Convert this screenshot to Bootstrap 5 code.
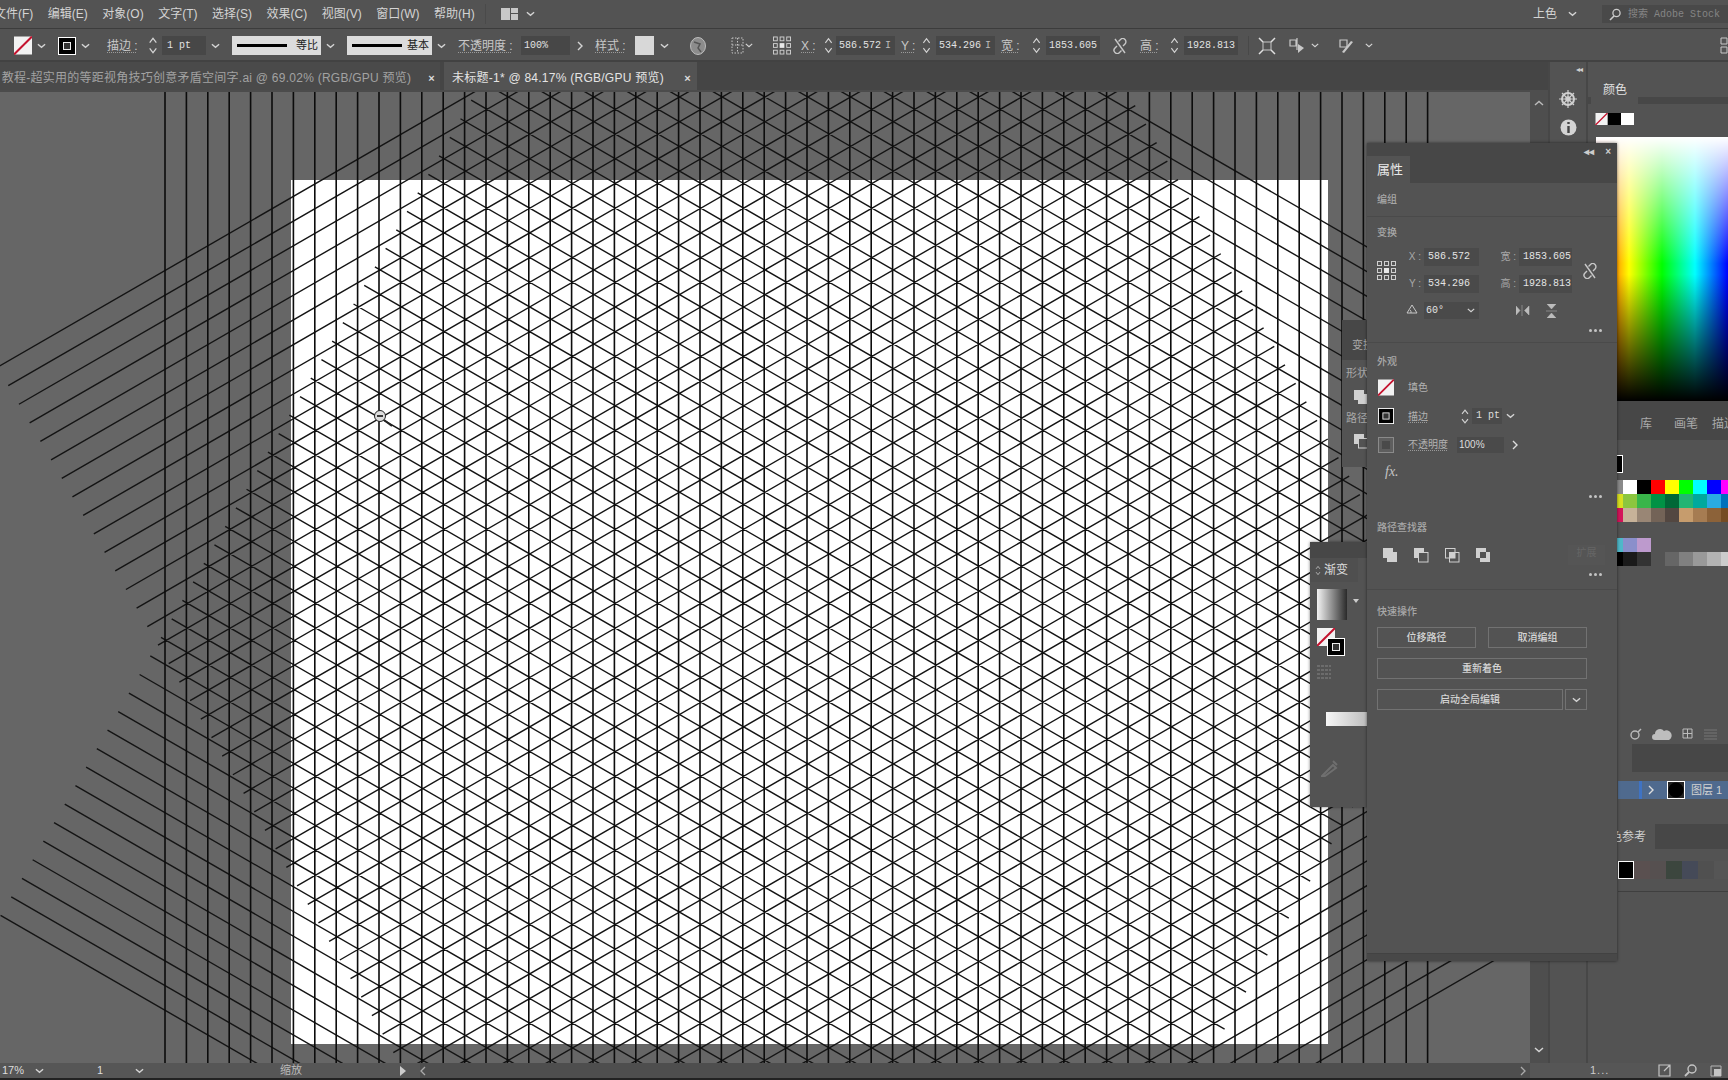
<!DOCTYPE html>
<html lang="zh-CN">

<head>
    <meta charset="UTF-8">
    <title>Illustrator</title>
    <link rel="stylesheet" href="https://cdn.jsdelivr.net/npm/bootstrap@5.3.0/dist/css/bootstrap.min.css">
    <style>
        html, body { margin: 0; background: #535353; overflow: hidden; }
        body { font-family: "Liberation Sans", "Noto Sans CJK SC", sans-serif; font-size: 12px; color: #d4d4d4; }
        svg { display: block; flex: none; }

        .app-shell { width: 1728px; height: 1080px; }

        /* menu */
        .menu-bar { height: 29px; border-bottom: 1px solid #3c3c3c; gap: 14.5px; }
        .menu-first { margin-left: -6px; }
        .menu-sep { width: 1px; height: 20px; background: #4a4a4a; margin-left: -4px; }
        .menu-chev { margin-left: -6px; }
        .menu-chev-right { margin-left: -4px; }
        .search-box { width: 126px; height: 18px; background: #494949; margin-left: 11px; padding-left: 7px; gap: 6px; color: #858585; font-family: "Liberation Mono", "Noto Sans CJK SC", monospace; font-size: 10px; white-space: nowrap; overflow: hidden; }

        /* option bar */
        .opt-bar { height: 33px; border-bottom: 2px solid #424242; padding-top: 2px; }
        .cell { flex: none; height: 19px; display: flex; align-items: center; justify-content: center; }
        .cell-lab { color: #c8c8c8; justify-content: flex-start; text-decoration: underline dotted #9a9a9a; text-underline-offset: 2px; white-space: nowrap; font-size: 12px; }
        .cell-in { background: #474747; justify-content: flex-start; padding-left: 3px; color: #e2e2e2; font-family: "Liberation Mono", "Noto Sans CJK SC", monospace; font-size: 10px; }
        .cell-in i { font-style: normal; margin-left: 4px; color: #bbb; }
        .stroke-pick { background: #dcdcdc; color: #222; padding: 0 3px 0 5px; justify-content: space-between; font-size: 11px; }
        .stroke-line { width: 50px; height: 3px; background: #000; }
        .style-swatch { background: #d8d8d8; }
        .opt-sep { background: #484848; }
        .w1{width:1px}.w8{width:8px}.w10{width:10px}.w11{width:11px}.w13{width:13px}.w15{width:15px}.w16{width:16px}.w18{width:18px}.w19{width:19px}.w20{width:20px}.w25{width:25px}.w35{width:35px}.w36{width:36px}.w44{width:44px}.w49{width:49px}.w54{width:54px}.w59{width:59px}.w60{width:60px}.w85{width:85px}.w89{width:89px}
        .g1{margin-left:1px}.g2{margin-left:2px}.g3{margin-left:3px}.g4{margin-left:4px}.g5{margin-left:5px}.g6{margin-left:6px}.g8{margin-left:8px}.g9{margin-left:9px}.g10{margin-left:10px}.g12{margin-left:12px}.g13{margin-left:13px}.g14{margin-left:14px}.g16{margin-left:16px}.g18{margin-left:18px}.g19{margin-left:19px}.g25{margin-left:25px}
        .pt-pad { padding-left: 5px; }

        /* document area */
        .main-row { height: 1001px; }
        .doc-col { width: 1548px; }
        .tab-strip { height: 28px; background: #454545; }
        .doc-tab { height: 28px; white-space: nowrap; overflow: hidden; padding-top: 4px; letter-spacing: .25px; }
        .doc-tab-old { width: 440px; background: #4a4a4a; color: #a2a2a2; justify-content: flex-end; padding-right: 5px; gap: 17px; }
        .doc-tab-on { width: 253px; margin-left: 4px; background: #535353; color: #e4e4e4; padding-left: 8px; justify-content: space-between; padding-right: 6px; }
        .tab-x { font-weight: 700; font-size: 11px; color: #ddd; }
        .canvas-box { background: #666; border-top: 2px solid #4c4c4c; }
        .canvas-art { left: 0; top: -2px; }
        .vscroll { width: 18px; background: #4e4e4e; padding: 6px 0; }

        /* right dock */
        .icon-strip { width: 40px; border-left: 2px solid #474747; border-right: 2px solid #474747; gap: 10px; }
        .strip-arrows { height: 17px; font-size: 8px; color: #cfcfcf; letter-spacing: -1px; align-self: flex-end; padding: 2px 4px 0 0; }
        .dock-col { width: 140px; }
        .dock-gap { height: 14px; }
        .dock-tabs { height: 28px; background: linear-gradient(to bottom, transparent 21px, #474747 21px); }
        .dock-tab-on { width: 47px; margin-left: 3px; background: #535353; color: #e2e2e2; font-size: 12px; padding-left: 12px; }
        .mini-swatches { height: 33px; padding: 9px 0 0 7px; }
        .mini-cell { width: 13px; height: 12px; }
        .bg-k { background: #000; }
        .bg-w { background: #fff; }
        .spectrum { height: 264px; margin-left: 8px; background: linear-gradient(to bottom, #fff 0%, rgba(255,255,255,0) 48%, rgba(0,0,0,0) 52%, #000 100%), linear-gradient(to right, #f00 0, #ff0 33px, #0f0 66px, #0ff 99px, #00f 132px); }
        .dock-band { height: 7px; background: #474747; }
        .tabs-two { height: 32px; background: #474747; color: #a9a9a9; font-size: 12px; padding-left: 30px; gap: 0; }
        .tab-lib { width: 34px; margin-left: 22px; flex: none; }
        .tab-brush { width: 26px; flex: none; }
        .tab-desc { margin-left: 12px; white-space: nowrap; }
        .black-row { height: 40px; padding: 15px 0 0 29px; }
        .black-mark { width: 6px; height: 18px; background: #000; border: 1px solid #fff; border-left: 0; }
        .swatch-grid { display: grid; grid-template-columns: repeat(9, 14px); margin-left: 21px; grid-auto-rows: 14px; }
        .swatch-sp { height: 16px; }
        .dock-spacer { height: 158px; }
        .dock-tools { height: 20px; padding-left: 42px; gap: 10px; }
        .layer-head { height: 28px; background: #474747; margin-left: 44px; }
        .layer-row { height: 18px; margin-top: 9px; margin-left: 30px; background: #4f6a8e; color: #d2d2d2; font-size: 11px; }
        .layer-bar { width: 3px; height: 18px; background: #3f73c4; margin-left: 21px; }
        .layer-thumb { width: 18px; height: 18px; background: #fff; padding: 1px; margin-left: 13px; margin-right: 6px; }
        .layer-dot { width: 16px; height: 16px; background: radial-gradient(circle, #000 62%, #222 70%); }
        .layer-row > svg { margin-left: 6px; }
        .dock-tabs-three { height: 25px; margin-top: 25px; background: #474747; }
        .ref-tab { width: 67px; height: 25px; background: #535353; color: #d0d0d0; font-size: 12px; padding-right: 9px; white-space: nowrap; flex: none; }
        .ref-row { height: 18px; margin-top: 12px; margin-left: 30px; gap: 0; }
        .ref-black { width: 16px; height: 18px; background: #000; border: 1px solid #fff; flex: none; }
        .ref-mute { width: 16px; height: 18px; flex: none; }
        .ref-line { height: 1px; background: #3f3f3f; margin-top: 12px; margin-left: 30px; }

        /* properties panel */
        .prop-panel { left: 1367px; top: 81px; width: 250px; height: 818px; background: #535353; box-shadow: 0 0 3px rgba(0,0,0,.55); z-index: 3; }
        .prop-head { height: 40px; background: #474747; }
        .prop-tab { width: 43px; height: 27px; background: #535353; color: #e8e8e8; font-size: 13px; padding-left: 10px; }
        .prop-head-tools { right: 6px; top: 1px; gap: 11px; color: #ccc; font-size: 10px; font-weight: 700; }
        .sec { padding: 0 10px; border-bottom: 1px solid #4a4a4a; }
        .sec-lab { font-size: 10px; color: #a8a8a8; line-height: 14px; font-weight: 500; }
        .sec-group { height: 34px; padding-top: 10px; }
        .sec-trans { height: 126px; padding-top: 9px; }
        .sec-look { height: 169px; padding-top: 12px; border-bottom: 0; }
        .sec-path { height: 78px; padding-top: 9px; }
        .sec-quick { padding-top: 15px; border-bottom: 0; }
        .trans-grid { display: grid; grid-template-columns: 19px 28px 55px 40px 53px 26px; grid-template-rows: 18px 18px 17px; row-gap: 9px; margin-top: 8px; }
        .ref-span { grid-area: 1 / 1 / 3 / 2; align-self: center; }
        .link-span { grid-area: 1 / 6 / 3 / 7; align-self: center; justify-self: end; }
        .field-lab { color: #a8a8a8; font-size: 10px; text-align: right; padding-right: 3px; line-height: 18px; }
        .field-in { background: #4a4a4a; color: #e4e4e4; font-family: "Liberation Mono", "Noto Sans CJK SC", monospace; font-size: 10px; padding-left: 4px; line-height: 17px; }
        .angle-in { justify-content: space-between; padding-right: 4px; padding-left: 2px; }
        .angle-ic { grid-column: 2; justify-self: end; padding-right: 6px; }
        .flip-wrap { grid-column: 4 / span 2; padding-left: 37px; gap: 15px; }
        .more-dots { height: 4px; margin-top: 10px; gap: 2px; padding-right: 5px; }
        .more-dots b { width: 3px; height: 3px; border-radius: 50%; background: #c4c4c4; }
        .dots-look { margin-top: 16px; }
        .look-row { height: 17px; margin-bottom: 11.5px; }
        .look-lab { width: 52px; margin-left: 14px; font-size: 10px; color: #b2b2b2; white-space: nowrap; }
        .look-lab-ul { text-decoration: underline dotted #999; text-underline-offset: 2px; }
        .look-first { margin-top: 10px; }
        .pt-in { width: 30px; height: 16px; background: #4a4a4a; font-family: "Liberation Mono", monospace; font-size: 10px; color: #ddd; padding-left: 4px; line-height: 15px; }
        .pct-in { width: 47px; height: 16px; background: #4a4a4a; font-size: 10px; color: #ddd; margin-left: -3px; padding-left: 2px; line-height: 15px; }
        .fx-mark { font-family: "Liberation Serif", serif; font-style: italic; font-size: 14px; color: #c4c4c4; margin: 2px 0 0 8px; line-height: 14px; }
        .path-icons { margin-top: 12px; margin-left: 5px; gap: 15px; height: 16px; }
        .path-off { width: 37px; height: 20px; margin-left: 62px; color: #666; background: #555; font-size: 10px; text-align: center; }
        .act-btn { --bs-btn-padding-y: 0; --bs-btn-padding-x: 0; --bs-btn-font-size: 10px; --bs-btn-color: #d6d6d6; --bs-btn-border-color: #727272; --bs-btn-border-radius: 0; --bs-btn-hover-color: #fff; height: 21px; line-height: 19px; font-weight: 500; }
        .act-half { width: 99px; }
        .act-wide { width: 210px; }
        .act-main { width: 186px; }
        .act-side { width: 22px; height: 21px; border: 1px solid #727272; margin-left: 2px; }
        .act-stack { gap: 10px; margin-top: 8px; }
        .prop-grip { bottom: 0; left: 0; right: 0; height: 8px; background: #484848; border-top: 1px solid #424242; }

        /* docked fragments under the properties panel */
        .shape-panel { left: 1342px; top: 258px; width: 25px; height: 147px; background: #535353; z-index: 2; color: #a8a8a8; font-size: 11px; white-space: nowrap; }
        .shape-head { height: 40px; background: #474747; padding: 17px 0 0 10px; }
        .shape-lab { margin: 5px 0 0 4px; }
        .shape-ic { margin: 7px 0 4px 11px; }
        .grad-panel { left: 1310px; top: 480px; width: 57px; height: 265px; background: #535353; z-index: 2; box-shadow: 0 0 3px rgba(0,0,0,.5); }
        .grad-head { height: 16px; background: #474747; }
        .grad-tab { height: 24px; width: 48px; color: #dcdcdc; font-size: 12px; background: #4f4f4f; padding-left: 5px; gap: 3px; white-space: nowrap; }
        .grad-box { width: 30px; height: 31px; background: linear-gradient(to right, #f4f4f4, #2a2a2a); margin: 7px 0 0 7px; }
        .grad-tip { margin: 9px 0 0 7px; }
        .grad-pick { margin: 8px 0 0 7px; height: 28px; }
        .grad-stroke { margin-left: -8px; margin-top: 10px; }
        .grad-bar { width: 41px; height: 14px; background: linear-gradient(to right, #f6f6f6, #bdbdbd); margin: 33px 0 0 16px; }
        .grad-ink { margin: 31px 0 0 11px; }

        /* status */
        .status-bar { height: 17px; border-bottom: 2px solid #222; background: #565656; font-size: 11px; color: #ddd; white-space: nowrap; }
        .st-zoom { width: 35px; padding-left: 2px; }
        .st-page { margin-left: 53px; width: 38px; }
        .st-name { margin-left: 136px; width: 120px; color: #bbb; }
        .st-track { width: 1110px; height: 15px; background: #4e4e4e; flex: none; padding: 0 4px 0 0; }
        .st-arrow { width: 20px; }
        .st-right { margin-left: 60px; gap: 13px; }
        .st-one { margin-right: 36px; font-size: 11px; color: #ccc; letter-spacing: 1px; }
    </style>
</head>

<body>
    <svg class="d-none" xmlns="http://www.w3.org/2000/svg">
        <symbol id="chev" viewBox="0 0 10 6"><path d="M1 1l4 3.5L9 1" fill="none" stroke="#d4d4d4" stroke-width="1.5" /></symbol>
        <symbol id="updown" viewBox="0 0 10 20"><path d="M1.5 7L5 2.5 8.5 7M1.5 13L5 17.5 8.5 13" fill="none" stroke="#d4d4d4" stroke-width="1.3" /></symbol>
        <symbol id="nofill" viewBox="0 0 18 18"><rect width="18" height="18" fill="#f2f2f2" /><path d="M0 18L18 0" stroke="#c4122e" stroke-width="2" /></symbol>
        <symbol id="strokebox" viewBox="0 0 18 18"><rect x=".5" y=".5" width="17" height="17" fill="#000" stroke="#fff" /><rect x="5.5" y="5.5" width="7" height="7" fill="#333" stroke="#eee" /></symbol>
        <symbol id="refpts" viewBox="0 0 19 19"><g fill="none" stroke="#cfcfcf"><rect x=".5" y=".5" width="4" height="4" /><rect x="7.5" y=".5" width="4" height="4" /><rect x="14.5" y=".5" width="4" height="4" /><rect x=".5" y="7.5" width="4" height="4" /><rect x="14.5" y="7.5" width="4" height="4" /><rect x=".5" y="14.5" width="4" height="4" /><rect x="7.5" y="14.5" width="4" height="4" /><rect x="14.5" y="14.5" width="4" height="4" /></g><rect x="7" y="7" width="5" height="5" fill="#e8e8e8" /></symbol>
        <symbol id="linkoff" viewBox="0 0 16 16"><path d="M6.500 3.500l2-2a3 3 0 0 1 4.500 4.500l-2 2M9.500 12.500l-2 2A3 3 0 0 1 3 10l2-2M3 1l10 14" fill="none" stroke="#c8c8c8" stroke-width="1.4" /></symbol>
        <symbol id="pf" viewBox="0 0 16 16"><rect x="1" y="1" width="10" height="10" fill="#d0d0d0" /><rect x="5" y="5" width="10" height="10" fill="#d0d0d0" /></symbol>
        <symbol id="pf2" viewBox="0 0 16 16"><rect x="1" y="1" width="10" height="10" fill="#d0d0d0" /><rect x="5.5" y="5.5" width="9.5" height="9.5" fill="#535353" stroke="#d0d0d0" /></symbol>
        <symbol id="pf3" viewBox="0 0 16 16"><rect x="1.5" y="1.5" width="9.5" height="9.5" fill="none" stroke="#d0d0d0" /><rect x="5.5" y="5.5" width="9.5" height="9.5" fill="none" stroke="#d0d0d0" /><rect x="5.5" y="5.5" width="5.5" height="5.5" fill="#d0d0d0" /></symbol>
        <symbol id="pf4" viewBox="0 0 16 16"><path d="M1 1h10v4h4v10H5v-4H1zM5 5v6h6V5z" fill="#d0d0d0" fill-rule="evenodd" /></symbol>
    </svg>

    <div class="app-shell d-flex flex-column">
        <!-- menu bar -->
        <div class="menu-bar d-flex align-items-center text-nowrap">
            <span class="menu-first">文件(F)</span><span>编辑(E)</span><span>对象(O)</span><span>文字(T)</span><span>选择(S)</span><span>效果(C)</span><span>视图(V)</span><span>窗口(W)</span><span>帮助(H)</span>
            <span class="menu-sep"></span>
            <svg width="17" height="12" viewBox="0 0 17 12"><path d="M0 0h9v12H0zM10 0h7v5h-7zM10 6h7v6h-7z" fill="#c8c8c8" /></svg>
            <svg class="menu-chev" width="9" height="6"><use href="#chev" /></svg>
            <span class="ms-auto">上色</span>
            <svg class="menu-chev-right" width="9" height="6"><use href="#chev" /></svg>
            <div class="search-box d-flex align-items-center">
                <svg width="13" height="13" viewBox="0 0 13 13"><circle cx="7.5" cy="5" r="3.6" fill="none" stroke="#ccc" stroke-width="1.3" /><path d="M5 8l-4 4" stroke="#ccc" stroke-width="1.6" /></svg>
                <span>搜索 Adobe Stock</span>
            </div>
        </div>

        <!-- control bar -->
        <div class="opt-bar d-flex align-items-center">
            <svg class="g14" width="18" height="19"><use href="#nofill" /></svg>
            <span class="cell w18"><svg width="9" height="6"><use href="#chev" /></svg></span>
            <svg class="g8" width="18" height="18"><use href="#strokebox" /></svg>
            <span class="cell w18"><svg width="9" height="6"><use href="#chev" /></svg></span>
            <span class="cell cell-lab g13 w35">描边 :</span>
            <span class="cell g3 w15"><svg width="10" height="19"><use href="#updown" /></svg></span>
            <span class="cell cell-in pt-pad g2 w44">1 pt</span>
            <span class="cell w18"><svg width="9" height="6"><use href="#chev" /></svg></span>
            <span class="cell stroke-pick g8 w89"><span class="stroke-line"></span>等比</span>
            <span class="cell w18"><svg width="9" height="6"><use href="#chev" /></svg></span>
            <span class="cell stroke-pick g8 w85"><span class="stroke-line"></span>基本</span>
            <span class="cell w18"><svg width="9" height="6"><use href="#chev" /></svg></span>
            <span class="cell cell-lab g8 w60">不透明度 :</span>
            <span class="cell cell-in g3 w49">100%</span>
            <span class="cell w20"><svg width="6" height="10" viewBox="0 0 6 10"><path d="M1 1l4 4-4 4" fill="none" stroke="#d4d4d4" stroke-width="1.4" /></svg></span>
            <span class="cell cell-lab g5 w36">样式 :</span>
            <span class="cell style-swatch g4 w19"></span>
            <span class="cell w20"><svg width="9" height="6"><use href="#chev" /></svg></span>
            <svg class="g16" width="16" height="18" viewBox="0 0 16 18"><ellipse cx="8" cy="9" rx="7.5" ry="8.5" fill="#8c8c8c" stroke="#bcbcbc" /><path d="M4 5l6 2-2 4 3 4" fill="none" stroke="#555" stroke-width="1.5" /></svg>
            <svg class="g25" width="13" height="17" viewBox="0 0 13 17"><path d="M1 1h11v15H1zM1 8h11M6.500 1v15" fill="none" stroke="#c4c4c4" stroke-dasharray="1.500 1.500" /></svg>
            <span class="cell w10"><svg width="8" height="5"><use href="#chev" /></svg></span>
            <svg class="g19" width="18" height="19"><use href="#refpts" /></svg>
            <span class="cell cell-lab g10 w19">X :</span>
            <span class="cell g3 w11"><svg width="9" height="19"><use href="#updown" /></svg></span>
            <span class="cell cell-in g2 w59">586.572<i>I</i></span>
            <span class="cell cell-lab g6 w19">Y :</span>
            <span class="cell g1 w11"><svg width="9" height="19"><use href="#updown" /></svg></span>
            <span class="cell cell-in g4 w59">534.296<i>I</i></span>
            <span class="cell cell-lab g6 w25">宽 :</span>
            <span class="cell g5 w11"><svg width="9" height="19"><use href="#updown" /></svg></span>
            <span class="cell cell-in g4 w54">1853.605</span>
            <svg class="g12" width="16" height="16"><use href="#linkoff" /></svg>
            <span class="cell cell-lab g12 w25">高 :</span>
            <span class="cell g4 w11"><svg width="9" height="19"><use href="#updown" /></svg></span>
            <span class="cell cell-in g4 w54">1928.813</span>
            <span class="cell opt-sep g10 w1"></span>
            <svg class="g9" width="18" height="18" viewBox="0 0 18 18"><path d="M5 5h8v8H5z" fill="none" stroke="#c8c8c8" /><path d="M1 1l4 4M17 1l-4 4M1 17l4-4M17 17l-4-4" stroke="#e0e0e0" stroke-width="1.5" /></svg>
            <svg class="g12" width="18" height="18" viewBox="0 0 18 18"><path d="M2 3h6v6H2zM9 1v12" fill="none" stroke="#c8c8c8" stroke-width="1.200" /><path d="M10 7l6 4-6 5z" fill="#c8c8c8" /></svg>
            <span class="cell g4 w10"><svg width="8" height="5"><use href="#chev" /></svg></span>
            <svg class="g18" width="18" height="18" viewBox="0 0 18 18"><path d="M2 3h7v7H2z" fill="none" stroke="#c8c8c8" stroke-width="1.200" /><path d="M15 5L6 16l-2-1 9-11z" fill="#c8c8c8" /></svg>
            <span class="cell g8 w10"><svg width="8" height="5"><use href="#chev" /></svg></span>
            <svg class="ms-auto" width="8" height="17" viewBox="0 0 8 17"><path d="M1 1h6v6H1zM1 10h6v6H1z" fill="none" stroke="#c8c8c8" /></svg>
        </div>

        <div class="main-row d-flex position-relative">
            <div class="doc-col d-flex flex-column">
                <div class="tab-strip d-flex">
                    <div class="doc-tab doc-tab-old d-flex align-items-center">
                        <span>教程-超实用的等距视角技巧创意矛盾空间字.ai @ 69.02% (RGB/GPU 预览)</span><span class="tab-x">×</span>
                    </div>
                    <div class="doc-tab doc-tab-on d-flex align-items-center">
                        <span>未标题-1* @ 84.17% (RGB/GPU 预览)</span><span class="tab-x">×</span>
                    </div>
                </div>
                <div class="d-flex flex-grow-1">
                    <div class="canvas-box flex-grow-1 position-relative overflow-hidden">
                        <svg id="gridArt" class="canvas-art position-absolute" width="1530" height="975" viewBox="0 90 1530 975" xmlns="http://www.w3.org/2000/svg">
                            <rect x="291" y="180" width="1037" height="864" fill="#fff" />
                            <path id="diagLines" fill="none" stroke="#141414" stroke-width="1.4" />
                            <path id="vertLines" fill="none" stroke="#0c0c0c" stroke-width="1.6" />
                            <g>
                                <path d="M384 420l8 6" stroke="#222" stroke-width="2" />
                                <circle cx="380" cy="416" r="5.5" fill="#ddd" stroke="#222" />
                                <path d="M377 416h6" stroke="#111" stroke-width="1.600" />
                            </g>
                        </svg>
                    </div>
                    <div class="vscroll d-flex flex-column justify-content-between align-items-center">
                        <svg class="mt-1" width="10" height="6" viewBox="0 0 10 6"><path d="M1 5l4-3.500L9 5" fill="none" stroke="#bbb" stroke-width="1.400" /></svg>
                        <svg class="mb-1" width="10" height="6"><use href="#chev" /></svg>
                    </div>
                </div>
            </div>

            <div class="icon-strip d-flex flex-column align-items-center">
                <span class="strip-arrows">◂◂</span>
                <svg width="20" height="20" viewBox="0 0 20 20"><g fill="none" stroke="#d0d0d0"><circle cx="10" cy="10" r="6" stroke-width="2" /><circle cx="10" cy="10" r="2" stroke-width="1.500" /><path d="M10 1v18M1 10h18M4 4l12 12M16 4L4 16" stroke-width="1.200" /></g></svg>
                <svg width="17" height="17" viewBox="0 0 17 17"><circle cx="8.500" cy="8.500" r="8" fill="#d4d4d4" /><path d="M8.500 3v2M8.500 7v7" stroke="#444" stroke-width="2.400" /></svg>
            </div>

            <div class="dock-col d-flex flex-column overflow-hidden">
                <div class="dock-gap"></div>
                <div class="dock-tabs d-flex">
                    <div class="dock-tab-on d-flex align-items-center">颜色</div>
                </div>
                <div class="mini-swatches d-flex">
                    <svg width="13" height="12"><use href="#nofill" /></svg>
                    <span class="mini-cell bg-k"></span>
                    <span class="mini-cell bg-w"></span>
                </div>
                <div class="spectrum"></div>
                <div class="dock-band"></div>
                <div class="tabs-two d-flex align-items-center">
                    <span class="tab-lib">库</span><span class="tab-brush">画笔</span><span class="tab-desc">描边</span>
                </div>
                <div class="black-row"><div class="black-mark"></div></div>
                <div id="swatchesA" class="swatch-grid"></div>
                <div class="swatch-sp"></div>
                <div id="swatchesB" class="swatch-grid"></div>
                <div class="dock-spacer"></div>
                <div class="dock-tools d-flex align-items-center">
                    <svg width="12" height="12" viewBox="0 0 12 12"><circle cx="5" cy="7" r="4" fill="none" stroke="#bbb" stroke-width="1.400" /><path d="M8 4l3-3" stroke="#bbb" stroke-width="1.500" /></svg>
                    <svg width="20" height="12" viewBox="0 0 20 12"><path d="M3 12a3 3 0 0 1 0-6 5 5 0 0 1 9-3 4 4 0 0 1 5 9z" fill="#bdbdbd" /></svg>
                    <svg width="12" height="12" viewBox="0 0 12 12"><path d="M1 1h9v9H1zM1 5.500h9M5.500 1v9" fill="none" stroke="#bbb" /></svg>
                    <svg width="13" height="11" viewBox="0 0 13 11"><path d="M0 1h13M0 4h13M0 7h13M0 10h13" stroke="#777" /></svg>
                </div>
                <div class="layer-head"></div>
                <div class="layer-row d-flex align-items-center">
                    <span class="layer-bar"></span>
                    <svg width="6" height="10" viewBox="0 0 6 10"><path d="M1 1l4 4-4 4" fill="none" stroke="#ddd" stroke-width="1.400" /></svg>
                    <span class="layer-thumb"><span class="layer-dot d-block"></span></span>
                    <span class="text-nowrap">图层 1</span>
                </div>
                <div class="dock-tabs-three d-flex">
                    <div class="ref-tab d-flex align-items-center justify-content-end">色参考</div>
                </div>
                <div class="ref-row d-flex">
                    <span class="ref-black"></span>
                    <span id="refMutes" class="d-flex"></span>
                </div>
                <div class="ref-line"></div>
            </div>

            <!-- docked fragments partly hidden by the properties panel -->
            <div class="shape-panel position-absolute overflow-hidden">
                <div class="shape-head">变换</div>
                <div class="shape-lab">形状</div>
                <svg class="shape-ic" width="16" height="16"><use href="#pf" /></svg>
                <div class="shape-lab">路径</div>
                <svg class="shape-ic" width="16" height="16"><use href="#pf2" /></svg>
            </div>
            <div class="grad-panel position-absolute overflow-hidden">
                <div class="grad-head"></div>
                <div class="grad-tab d-flex align-items-center">
                    <svg width="6" height="11"><use href="#updown" /></svg><span>渐变</span>
                </div>
                <div class="d-flex align-items-center">
                    <div class="grad-box"></div>
                    <svg class="g6" width="6" height="4" viewBox="0 0 6 4"><path d="M0 0h6L3 4z" fill="#ccc" /></svg>
                </div>
                <div class="grad-pick d-flex">
                    <svg width="18" height="18"><use href="#nofill" /></svg>
                    <svg class="grad-stroke" width="18" height="18"><use href="#strokebox" /></svg>
                </div>
                <svg class="grad-tip" width="14" height="14" viewBox="0 0 14 14"><path d="M0 1h14M0 5h14M0 9h14M0 13h14" stroke="#6c6c6c" stroke-width="2" stroke-dasharray="3 1" /></svg>
                <div class="grad-bar"></div>
                <svg class="grad-ink" width="20" height="20" viewBox="0 0 20 20"><path d="M1 19l11-11 3 3-11 8zM12 4l4 4" fill="none" stroke="#6f6f6f" stroke-width="2" /></svg>
            </div>

            <!-- properties panel -->
            <div class="prop-panel position-absolute">
                <div class="prop-head position-relative d-flex align-items-end">
                    <div class="prop-tab d-flex align-items-center">属性</div>
                    <div class="prop-head-tools position-absolute d-flex"><span>◂◂</span><span>×</span></div>
                </div>

                <div class="sec sec-group"><div class="sec-lab">编组</div></div>

                <div class="sec sec-trans">
                    <div class="sec-lab">变换</div>
                    <div class="trans-grid">
                        <svg class="ref-span" width="19" height="19"><use href="#refpts" /></svg>
                        <svg class="link-span" width="16" height="16"><use href="#linkoff" /></svg>
                        <span class="field-lab">X :</span><span class="field-in">586.572</span>
                        <span class="field-lab">宽 :</span><span class="field-in">1853.605</span>
                        <span class="field-lab">Y :</span><span class="field-in">534.296</span>
                        <span class="field-lab">高 :</span><span class="field-in">1928.813</span>
                        <svg class="angle-ic" width="18" height="14" viewBox="0 0 12 10"><path d="M1 9h10L6 1zM5 9a3 3 0 0 0-1-3" fill="none" stroke="#c8c8c8" /></svg>
                        <span class="field-in angle-in d-flex align-items-center">60°<svg width="8" height="5"><use href="#chev" /></svg></span>
                        <span class="flip-wrap d-flex align-items-center">
                            <svg width="14" height="13" viewBox="0 0 14 13"><path d="M6 1v11M0 2l4 4.500L0 11zM13 2L8.500 6.500 13 11z" fill="#bcbcbc" stroke="#bcbcbc" stroke-width=".5" /></svg>
                            <svg width="13" height="14" viewBox="0 0 13 14"><path d="M1 7h11M2 0h9L6.500 5zM2 14h9L6.500 9z" fill="#bcbcbc" stroke="#bcbcbc" stroke-width=".5" /></svg>
                        </span>
                    </div>
                    <div class="more-dots d-flex justify-content-end"><b></b><b></b><b></b></div>
                </div>

                <div class="sec sec-look">
                    <div class="sec-lab">外观</div>
                    <div class="look-row look-first d-flex align-items-center">
                        <svg class="g1" width="16" height="17"><use href="#nofill" /></svg>
                        <span class="look-lab">填色</span>
                    </div>
                    <div class="look-row d-flex align-items-center">
                        <svg class="g1" width="16" height="16"><use href="#strokebox" /></svg>
                        <span class="look-lab look-lab-ul">描边</span>
                        <svg width="10" height="17"><use href="#updown" /></svg>
                        <span class="pt-in g2">1 pt</span>
                        <svg class="g4" width="9" height="6"><use href="#chev" /></svg>
                    </div>
                    <div class="look-row d-flex align-items-center">
                        <svg class="g1" width="16" height="16" viewBox="0 0 16 16"><rect x=".5" y=".5" width="15" height="15" fill="#5e5e5e" stroke="#8a8a8a" /><path d="M4 4h8v8H4z" fill="#4a4a4a" /></svg>
                        <span class="look-lab look-lab-ul">不透明度</span>
                        <span class="pct-in">100%</span>
                        <svg class="g8" width="6" height="10" viewBox="0 0 6 10"><path d="M1 1l4 4-4 4" fill="none" stroke="#ddd" stroke-width="1.400" /></svg>
                    </div>
                    <div class="fx-mark">fx.</div>
                    <div class="more-dots dots-look d-flex justify-content-end"><b></b><b></b><b></b></div>
                </div>

                <div class="sec sec-path">
                    <div class="sec-lab">路径查找器</div>
                    <div class="path-icons d-flex align-items-center">
                        <svg width="16" height="16"><use href="#pf" /></svg>
                        <svg width="16" height="16"><use href="#pf2" /></svg>
                        <svg width="16" height="16"><use href="#pf3" /></svg>
                        <svg width="16" height="16"><use href="#pf4" /></svg>
                        <span class="path-off">扩展</span>
                    </div>
                    <div class="more-dots d-flex justify-content-end"><b></b><b></b><b></b></div>
                </div>

                <div class="sec sec-quick">
                    <div class="sec-lab">快速操作</div>
                    <div class="act-stack d-flex flex-column">
                        <div class="d-flex gap-2">
                            <button type="button" class="btn act-btn act-half">位移路径</button>
                            <button type="button" class="btn act-btn act-half ms-1">取消编组</button>
                        </div>
                        <button type="button" class="btn act-btn act-wide">重新着色</button>
                        <div class="d-flex">
                            <button type="button" class="btn act-btn act-main">启动全局编辑</button>
                            <span class="act-side d-flex align-items-center justify-content-center"><svg width="9" height="6"><use href="#chev" /></svg></span>
                        </div>
                    </div>
                </div>
                <div class="prop-grip position-absolute"></div>
            </div>
        </div>

        <!-- status bar -->
        <div class="status-bar d-flex align-items-center">
            <span class="st-zoom">17%</span>
            <svg width="9" height="6"><use href="#chev" /></svg>
            <span class="st-page">1</span>
            <svg width="9" height="6"><use href="#chev" /></svg>
            <span class="st-name">缩放</span>
            <span class="st-arrow"><svg width="6" height="10" viewBox="0 0 6 10"><path d="M0 0l6 5-6 5z" fill="#ccc" /></svg></span>
            <span class="st-track d-flex align-items-center justify-content-between">
                <svg width="6" height="10" viewBox="0 0 6 10"><path d="M5 1L1 5l4 4" fill="none" stroke="#aaa" stroke-width="1.300" /></svg>
                <svg width="6" height="10" viewBox="0 0 6 10"><path d="M1 1l4 4-4 4" fill="none" stroke="#aaa" stroke-width="1.300" /></svg>
            </span>
            <span class="st-right d-flex align-items-center">
                <span class="st-one">1...</span>
                <svg width="13" height="13" viewBox="0 0 13 13"><path d="M9 1H1v11h11V5M6 7l6-6M8 1h4v4" fill="none" stroke="#c4c4c4" stroke-width="1.200" /></svg>
                <svg width="13" height="13" viewBox="0 0 13 13"><circle cx="8" cy="5" r="4" fill="none" stroke="#c4c4c4" stroke-width="1.400" /><path d="M5 8l-4 4" stroke="#c4c4c4" stroke-width="1.800" /></svg>
                <svg width="12" height="12" viewBox="0 0 12 12"><path d="M1 1h10v10H1z" fill="none" stroke="#b4b4b4" /><path d="M4 4h7v7H4z" fill="#c4c4c4" /></svg>
            </span>
        </div>
    </div>

    <script>
        // isometric grid: 60 verticals and 60 lines for each diagonal, cut off on two 60deg edges
        const SLOPE_GAP = 2.3094;
        const ROW = 24.7;
        let verts = "";
        let diags = "";
        for (let i = 0; i < 60; i++) {
            const x = 165 + 21.4 * i;
            verts += `M${x} 90V1063`;

            const c = -542.3 + i * ROW;
            const x1 = (916.3 - c) / SLOPE_GAP;
            const x2 = (3150.3 - c) / SLOPE_GAP;
            diags += `M${x1} ${c + 0.57735 * x1}L${x2} ${c + 0.57735 * x2}`;

            const d = 365.8 + i * ROW;
            const x3 = (d - 371.4) / SLOPE_GAP;
            const x4 = (d + 1860.8) / SLOPE_GAP;
            diags += `M${x3} ${d - 0.57735 * x3}L${x4} ${d - 0.57735 * x4}`;
        }
        document.getElementById("vertLines").setAttribute("d", verts);
        document.getElementById("diagLines").setAttribute("d", diags);

        function fillSwatches(id, colors) {
            document.getElementById(id).innerHTML = colors
                .map(c => `<span style="background:${c}"></span>`)
                .join("");
        }
        fillSwatches("swatchesA", [
            "#8a8a8a", "#ffffff", "#000000", "#ff0000", "#ffff00", "#00ff00", "#00ffff", "#0000ff", "#ff00ff",
            "#d9e021", "#8cc63f", "#39b54a", "#009245", "#006837", "#22b573", "#00a99d", "#29abe2", "#0071bc",
            "#d4145a", "#c7b299", "#998675", "#736357", "#534741", "#c69c6d", "#a67c52", "#8c6239", "#754c24"
        ]);
        fillSwatches("swatchesB", [
            "#4fb8c9", "#8a8fcb", "#bd9acd", "#535353", "#535353", "#535353", "#535353", "#535353", "#535353",
            "#000000", "#1a1a1a", "#333333", "#535353", "#666666", "#808080", "#999999", "#b3b3b3", "#cccccc"
        ]);
        document.getElementById("refMutes").innerHTML = ["#5a5050", "#565050", "#3c463e", "#454a58", "#505050", "#555555"]
            .map(c => `<span class="ref-mute" style="background:${c}"></span>`)
            .join("");
    </script>
    <script src="https://cdn.jsdelivr.net/npm/bootstrap@5.3.0/dist/js/bootstrap.bundle.min.js"></script>
</body>

</html>
